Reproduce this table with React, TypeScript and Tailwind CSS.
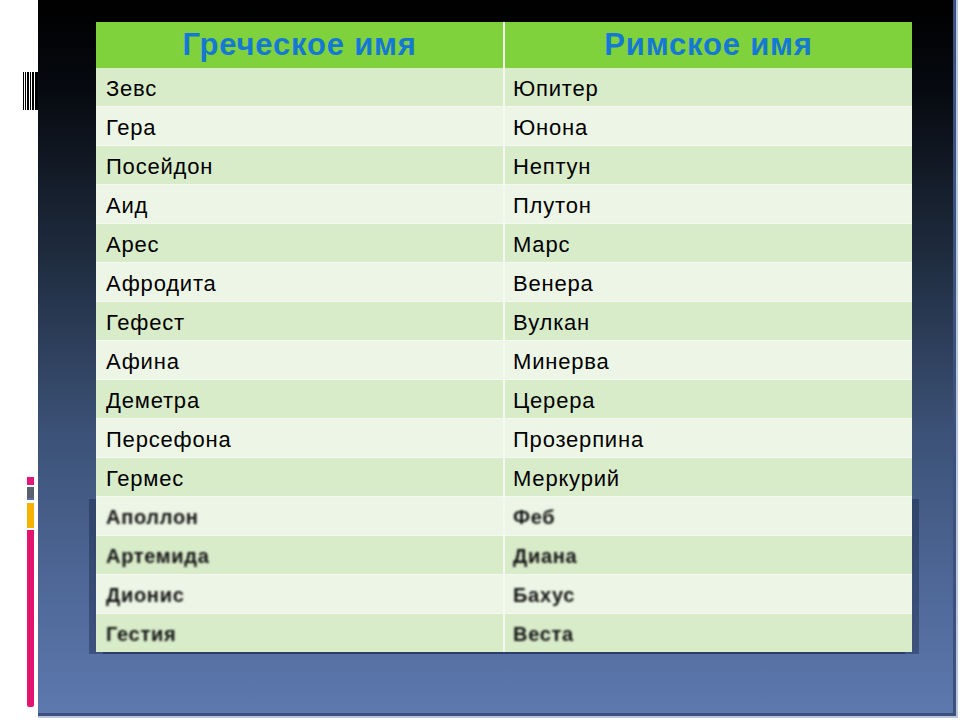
const rows: [string, string][] = [
  ["Зевс", "Юпитер"],
  ["Гера", "Юнона"],
  ["Посейдон", "Нептун"],
  ["Аид", "Плутон"],
  ["Арес", "Марс"],
  ["Афродита", "Венера"],
  ["Гефест", "Вулкан"],
  ["Афина", "Минерва"],
  ["Деметра", "Церера"],
  ["Персефона", "Прозерпина"],
  ["Гермес", "Меркурий"],
];

const blurred: [string, string][] = [
  ["Аполлон", "Феб"],
  ["Артемида", "Диана"],
  ["Дионис", "Бахус"],
  ["Гестия", "Веста"],
];

// barcode strokes: [x, width]
const bars: [number, number][] = [
  [1, 1], [3, 1], [5, 2], [8, 1], [10, 2], [13, 3],
];

function Row({ left, right, index, soft }: { left: string; right: string; index: number; soft?: boolean }) {
  const bg = index % 2 === 0 ? "bg-[#d9ecca]" : "bg-[#edf6e6]";
  const text = soft
    ? "font-bold text-[20px] text-[#141414] blur-[0.8px] tracking-[0.7px]"
    : "text-[22px] text-black tracking-[0.8px]";
  return (
    <>
      <div className={`${bg} h-[38px] flex items-center pl-[10px] pt-[2px]`}>
        <span className={text}>{left}</span>
      </div>
      <div className={`${bg} h-[38px] flex items-center pl-[8px] pt-[2px]`}>
        <span className={text}>{right}</span>
      </div>
    </>
  );
}

export default function App() {
  return (
    <div className="w-[960px] h-[720px] bg-white flex overflow-hidden font-['Liberation_Sans',Arial,sans-serif]">
      {/* left decoration strip */}
      <div className="w-[38px] h-full flex flex-col shrink-0">
        <svg width="38" height="40" className="mt-[71px]" viewBox="0 0 38 40">
          {bars.map(([x, w]) => (
            <rect key={x} x={22 + x} y={1} width={w} height={38} fill="#000" />
          ))}
        </svg>
        <div className="mt-[366px] ml-[27px] w-[7px] flex flex-col">
          <div className="h-[8px] bg-[#e2197b]" />
          <div className="h-[13px] mt-[2px] bg-[#59616f] border-b-2 border-[#5d6fa8]" />
          <div className="h-[25px] mt-[3px] bg-[#f5b300]" />
          <div className="h-[177px] mt-[2px] bg-[#e3136f] rounded-b-[2px]" />
        </div>
      </div>

      {/* slide panel */}
      <div className="w-[920px] h-[718px] shrink-0 bg-[linear-gradient(180deg,#000000_0%,#06090f_12%,#1c2839_33%,#3b5176_60%,#4f6898_82%,#5d79ae_100%)] shadow-[inset_-2px_-2px_0_#b7c5df,inset_-5px_-5px_0_#3b507c]">
        <div className="ml-[58px] mt-[22px] w-[816px] bg-[#f3f9ee]">
          <div className="grid grid-cols-[407px_407px] gap-x-[2px] gap-y-[2px]">
            <div className="h-[46px] bg-[#80d23c] flex items-center justify-center text-[31px] font-bold text-[#1579d4] tracking-[0.8px]">
              Греческое имя
            </div>
            <div className="h-[46px] bg-[#80d23c] flex items-center justify-center text-[31px] font-bold text-[#1579d4] tracking-[0.8px]">
              Римское имя
            </div>
          </div>
          <div className="grid grid-cols-[407px_407px] gap-x-[2px] gap-y-px">
            {rows.map(([l, r], i) => (
              <Row key={l} left={l} right={r} index={i} />
            ))}
          </div>
          <div className="grid grid-cols-[407px_407px] gap-x-[2px] gap-y-px mt-px shadow-[-7px_2px_0_rgba(15,25,55,0.35),7px_2px_0_rgba(15,25,55,0.35)]">
            {blurred.map(([l, r], i) => (
              <Row key={l} left={l} right={r} index={i + 1} soft />
            ))}
          </div>
        </div>
      </div>
    </div>
  );
}
